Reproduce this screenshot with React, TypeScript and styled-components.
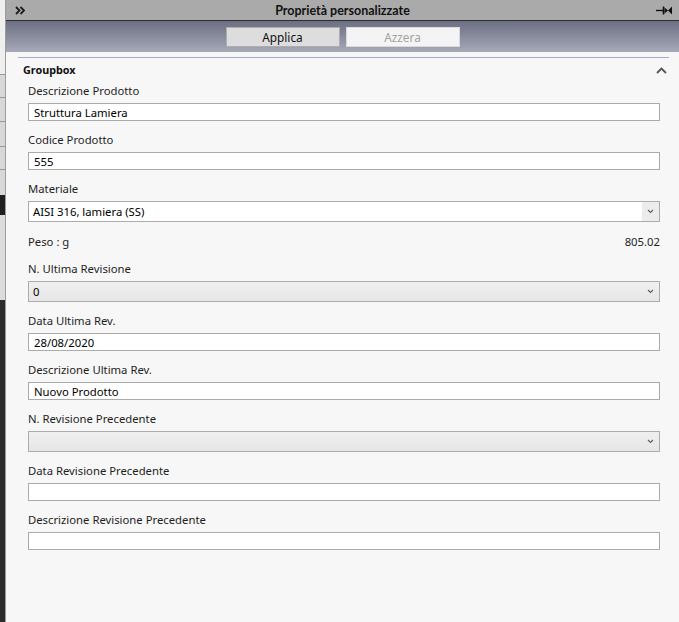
import React from 'react';
import styled, { createGlobalStyle } from 'styled-components';

const GlobalStyle = createGlobalStyle`
  html, body {
    margin: 0;
    padding: 0;
    background: #f7f7f7;
  }
  * {
    box-sizing: border-box;
  }
`;

const Screen = styled.div`
  display: flex;
  width: 679px;
  height: 622px;
  overflow: hidden;
  font-family: "Noto Sans", "Open Sans", sans-serif;
  font-size: 11.3px;
  color: #1a1a1a;
`;

const BackStrip = styled.div`
  width: 5px;
  display: flex;
  flex-direction: column;
`;

const StripBlock = styled.div<{ $h: number; $bg: string; $line?: boolean }>`
  height: ${(p) => p.$h}px;
  flex-shrink: 0;
  background: ${(p) => p.$bg};
  border-bottom: ${(p) => (p.$line ? '1px solid #9a9a9a' : 'none')};
`;

const StripRest = styled.div`
  flex: 1;
  background: #2b2b2b;
`;

const Panel = styled.div`
  flex: 1;
  display: flex;
  flex-direction: column;
  border-left: 1px solid #9c9c9c;
  min-width: 0;
`;

const Header = styled.div`
  height: 21px;
  flex-shrink: 0;
  display: grid;
  grid-template-columns: 30px 1fr 30px;
  align-items: center;
  background: #aaaaaa;
  border-bottom: 1px solid #2e2e2e;
`;

const Title = styled.div`
  text-align: center;
  font-family: "Lato", "Noto Sans", sans-serif;
  font-weight: bold;
  font-size: 12.5px;
  color: #111;
`;

const HeaderIcon = styled.div<{ $right?: boolean }>`
  display: flex;
  justify-content: ${(p) => (p.$right ? 'flex-end' : 'flex-start')};
  padding: ${(p) => (p.$right ? '0 6px 0 0' : '0 0 0 9px')};
  align-items: center;
`;

const Toolbar = styled.div`
  height: 31px;
  flex-shrink: 0;
  display: flex;
  justify-content: center;
  align-items: flex-start;
  gap: 6px;
  padding-top: 6px;
  background: linear-gradient(#6b6f82, #a6a9b7);
`;

const ToolButton = styled.div<{ $disabled?: boolean }>`
  width: 114px;
  height: 20px;
  display: flex;
  align-items: center;
  justify-content: center;
  background: ${(p) => (p.$disabled ? '#f4f4f4' : '#dddddd')};
  border: 1px solid ${(p) => (p.$disabled ? '#dadada' : '#adadad')};
  color: ${(p) => (p.$disabled ? '#a3a3a3' : '#111')};
  font-size: 11.8px;
`;

const Content = styled.div`
  flex: 1;
  background: #f7f7f7;
  padding: 5px 10px 0 12px;
`;

const GroupHead = styled.div`
  border-top: 1px solid #aaa8c6;
  display: flex;
  justify-content: space-between;
  align-items: center;
  padding: 4px 2px 0 5px;
  height: 21px;
`;

const GroupTitle = styled.div`
  font-weight: bold;
  font-size: 10.8px;
  line-height: 16px;
  color: #111;
`;

const Fields = styled.div`
  display: flex;
  flex-direction: column;
  gap: 11.1px;
  padding: 5.2px 9px 0 10px;
`;

const Field = styled.div`
  display: flex;
  flex-direction: column;
  gap: 4px;
`;

const Label = styled.div`
  line-height: 16px;
  height: 16px;
  color: #1e1e1e;
  white-space: nowrap;
`;

const TextBox = styled.div`
  height: 18px;
  background: #ffffff;
  border: 1px solid #ababab;
  padding-left: 5px;
  line-height: 17px;
  color: #000;
`;

const Combo = styled.div<{ $disabled?: boolean }>`
  height: 21px;
  display: flex;
  border: 1px solid #acacac;
  background: ${(p) => (p.$disabled ? 'linear-gradient(#f0f0f0, #e6e6e6)' : '#ffffff')};
`;

const ComboText = styled.div`
  flex: 1;
  padding-left: 4px;
  line-height: 20px;
  color: #000;
`;

const ComboArrow = styled.div<{ $boxed?: boolean }>`
  width: 17px;
  display: flex;
  align-items: center;
  justify-content: center;
  background: ${(p) => (p.$boxed ? '#ececec' : 'transparent')};
`;

const InfoRow = styled.div`
  display: flex;
  justify-content: space-between;
  line-height: 16px;
  height: 16px;
  padding-top: 1px;
  color: #1e1e1e;
`;

const ChevronDown = () => (
  <svg width="7" height="5" viewBox="0 0 7 5">
    <path d="M1 1 L3.5 3.5 L6 1" fill="none" stroke="#606060" strokeWidth="1.2" />
  </svg>
);

const DoubleChevron = () => (
  <svg width="11" height="9" viewBox="0 0 11 9">
    <path d="M1 1 L4.5 4.5 L1 8 M5.5 1 L9 4.5 L5.5 8" fill="none" stroke="#1c1c1c" strokeWidth="1.8" />
  </svg>
);

const PinIcon = () => (
  <svg width="17" height="9" viewBox="0 0 17 9">
    <path d="M0 4.5 H7" stroke="#111" strokeWidth="1.4" />
    <path d="M7.5 0.5 V8.5" stroke="#111" strokeWidth="1.6" />
    <path d="M8.5 1.5 L12 4.5 L8.5 7.5 Z M16 0.5 V8.5 L12 4.5 Z" fill="#111" />
  </svg>
);

const ChevronUp = () => (
  <svg width="11" height="7" viewBox="0 0 11 7">
    <path d="M1 6 L5.5 1.5 L10 6" fill="none" stroke="#555" strokeWidth="1.8" />
  </svg>
);

type FieldDef =
  | { kind: 'text'; label: string; value: string }
  | { kind: 'combo'; label: string; value: string; disabled?: boolean }
  | { kind: 'info'; label: string; value: string };

const fields: FieldDef[] = [
  { kind: 'text', label: 'Descrizione Prodotto', value: 'Struttura Lamiera' },
  { kind: 'text', label: 'Codice Prodotto', value: '555' },
  { kind: 'combo', label: 'Materiale', value: 'AISI 316, lamiera (SS)' },
  { kind: 'info', label: 'Peso : g', value: '805.02' },
  { kind: 'combo', label: 'N. Ultima Revisione', value: '0', disabled: true },
  { kind: 'text', label: 'Data Ultima Rev.', value: '28/08/2020' },
  { kind: 'text', label: 'Descrizione Ultima Rev.', value: 'Nuovo Prodotto' },
  { kind: 'combo', label: 'N. Revisione Precedente', value: '', disabled: true },
  { kind: 'text', label: 'Data Revisione Precedente', value: '' },
  { kind: 'text', label: 'Descrizione Revisione Precedente', value: '' },
];

const renderField = (f: FieldDef) => {
  if (f.kind === 'info') {
    return (
      <InfoRow key={f.label}>
        <span>{f.label}</span>
        <span>{f.value}</span>
      </InfoRow>
    );
  }
  return (
    <Field key={f.label}>
      <Label>{f.label}</Label>
      {f.kind === 'text' ? (
        <TextBox>{f.value}</TextBox>
      ) : (
        <Combo $disabled={f.disabled}>
          <ComboText>{f.value}</ComboText>
          <ComboArrow $boxed={!f.disabled}>
            <ChevronDown />
          </ComboArrow>
        </Combo>
      )}
    </Field>
  );
};

export default function App() {
  return (
    <>
      <GlobalStyle />
      <Screen>
        <BackStrip>
          <StripBlock $h={75} $bg="#efefef" $line />
          <StripBlock $h={23} $bg="#d8d8d8" $line />
          <StripBlock $h={24} $bg="#d8d8d8" $line />
          <StripBlock $h={25} $bg="#d8d8d8" $line />
          <StripBlock $h={23} $bg="#d8d8d8" $line />
          <StripBlock $h={25} $bg="#d8d8d8" />
          <StripBlock $h={20} $bg="#1f1f1f" />
          <StripBlock $h={85} $bg="#dcdcdc" />
          <StripRest />
        </BackStrip>
        <Panel>
          <Header>
            <HeaderIcon>
              <DoubleChevron />
            </HeaderIcon>
            <Title>Proprietà personalizzate</Title>
            <HeaderIcon $right>
              <PinIcon />
            </HeaderIcon>
          </Header>
          <Toolbar>
            <ToolButton>Applica</ToolButton>
            <ToolButton $disabled>Azzera</ToolButton>
          </Toolbar>
          <Content>
            <GroupHead>
              <GroupTitle>Groupbox</GroupTitle>
              <ChevronUp />
            </GroupHead>
            <Fields>{fields.map(renderField)}</Fields>
          </Content>
        </Panel>
      </Screen>
    </>
  );
}
